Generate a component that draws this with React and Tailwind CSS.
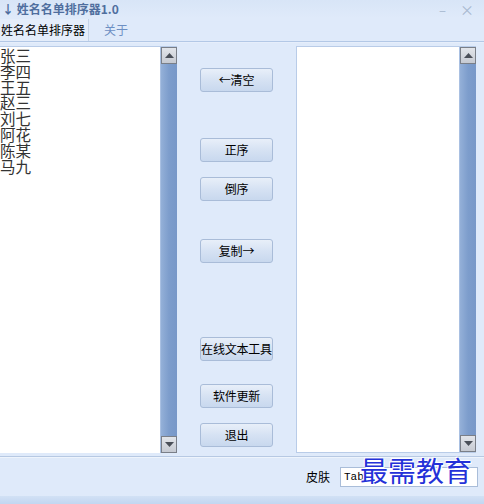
import React from 'react';

const names = ['张三', '李四', '王五', '赵三', '刘七', '阿花', '陈某', '马九'];

function ScrollBar() {
  return (
    <div className="w-[17px] h-full flex flex-col bg-[#7d9dcc] border-l border-[#a9c0e2]">
      <div className="h-[17px] bg-gradient-to-b from-[#e2e5ea] to-[#c6cad2] border border-[#7a7f88] flex items-center justify-center">
        <svg width="9" height="5" viewBox="0 0 9 5"><path d="M0 5 L4.5 0 L9 5 Z" fill="#4a4f58" /></svg>
      </div>
      <div className="flex-1 bg-gradient-to-r from-[#94b0d8] via-[#7d9dcc] to-[#7898c8]" />
      <div className="h-[17px] bg-gradient-to-b from-[#e2e5ea] to-[#c6cad2] border border-[#7a7f88] flex items-center justify-center">
        <svg width="9" height="5" viewBox="0 0 9 5"><path d="M0 0 L4.5 5 L9 0 Z" fill="#4a4f58" /></svg>
      </div>
    </div>
  );
}

function Btn({ children, className = '' }) {
  return (
    <button className={`w-[73px] h-[24px] shrink-0 rounded-[3px] border border-[#a9bcd8] bg-gradient-to-b from-[#e8eff9] via-[#d6e2f3] to-[#c8d8ee] text-[12px] text-black leading-none whitespace-nowrap tracking-[-0.2px] flex items-center justify-center overflow-visible ${className}`}>
      {children}
    </button>
  );
}

export default function App() {
  return (
    <div
      className="w-[484px] h-[504px] bg-[#dfeafa] flex flex-col overflow-hidden relative"
      style={{ fontFamily: '"Noto Sans CJK SC", "Noto Sans", sans-serif' }}
    >
      {/* title bar */}
      <div className="h-[18px] flex items-center bg-gradient-to-b from-[#d8e5f7] to-[#dfeafa]">
        <span className="pl-[2px] text-[12px] font-bold text-[#4f6e9e] leading-none">↓ 姓名名单排序器1.0</span>
        <div className="flex-1" />
        <span className="text-[#a7b8cf] text-[13px] leading-none mr-[14px]">–</span>
        <span className="text-[#a7b8cf] text-[14px] leading-none mr-[10px]">×</span>
      </div>

      {/* tabs */}
      <div className="h-[23px] flex items-end">
        <div className="h-[22px] w-[89px] flex items-center pl-[1px] border-r border-[#c4d3e8] bg-[#e4edfa] text-[12px] text-black">
          姓名名单排序器
        </div>
        <div className="ml-[15px] h-[22px] flex items-center text-[12px] text-[#6d8fc3]">关于</div>
      </div>
      <div className="h-[2px] border-t border-[#b3c8e6] bg-[#e6eefb]" />

      {/* content */}
      <div className="h-[414px] flex pt-[3px] pb-[3px] pr-[8px] border-b border-[#b7c9e3]">
        <div className="w-[177px] h-full flex bg-white border-t border-[#b9cce8]">
          <div className="flex-1 pt-[1px] text-[15.5px] leading-[15.8px] text-[#333]">
            {names.map((n) => (
              <div key={n}>{n}</div>
            ))}
          </div>
          <ScrollBar />
        </div>

        <div className="flex-1 flex flex-col items-center">
          <Btn className="mt-[22px]">←清空</Btn>
          <Btn className="mt-[46px]">正序</Btn>
          <Btn className="mt-[15px]">倒序</Btn>
          <Btn className="mt-[38px]">复制→</Btn>
          <Btn className="mt-[74px]">在线文本工具</Btn>
          <Btn className="mt-[23px]">软件更新</Btn>
          <Btn className="mt-[15px]">退出</Btn>
        </div>

        <div className="w-[180px] h-full flex bg-white border border-[#b9cce8] border-r-0 pl-[1px]">
          <div className="flex-1" />
          <ScrollBar />
        </div>
      </div>

      {/* status */}
      <div className="flex-1 flex items-center justify-end pr-[6px] border-t border-[#eef4fc]">
        <span className="text-[12px] text-black mr-[10px]">皮肤</span>
        <div className="w-[138px] h-[20px] bg-white border border-[#a9bdd9] flex items-center pl-[3px]">
          <span className="text-[11px] text-black" style={{ fontFamily: '"Liberation Mono", monospace' }}>Tab</span>
        </div>
      </div>
      <div className="h-[8px] bg-gradient-to-b from-[#d2e1f5] to-[#c2d6f1]" />

      {/* watermark */}
      <div
        className="absolute left-[360px] top-[456px] text-[28px] leading-none tracking-[0px] text-[#2431d8]"
        style={{ textShadow: '0 0 2px #fff, 0 0 2px #fff, 1px 1px 0 #fff, -1px -1px 0 #fff' }}
      >
        最需教育
      </div>
    </div>
  );
}
